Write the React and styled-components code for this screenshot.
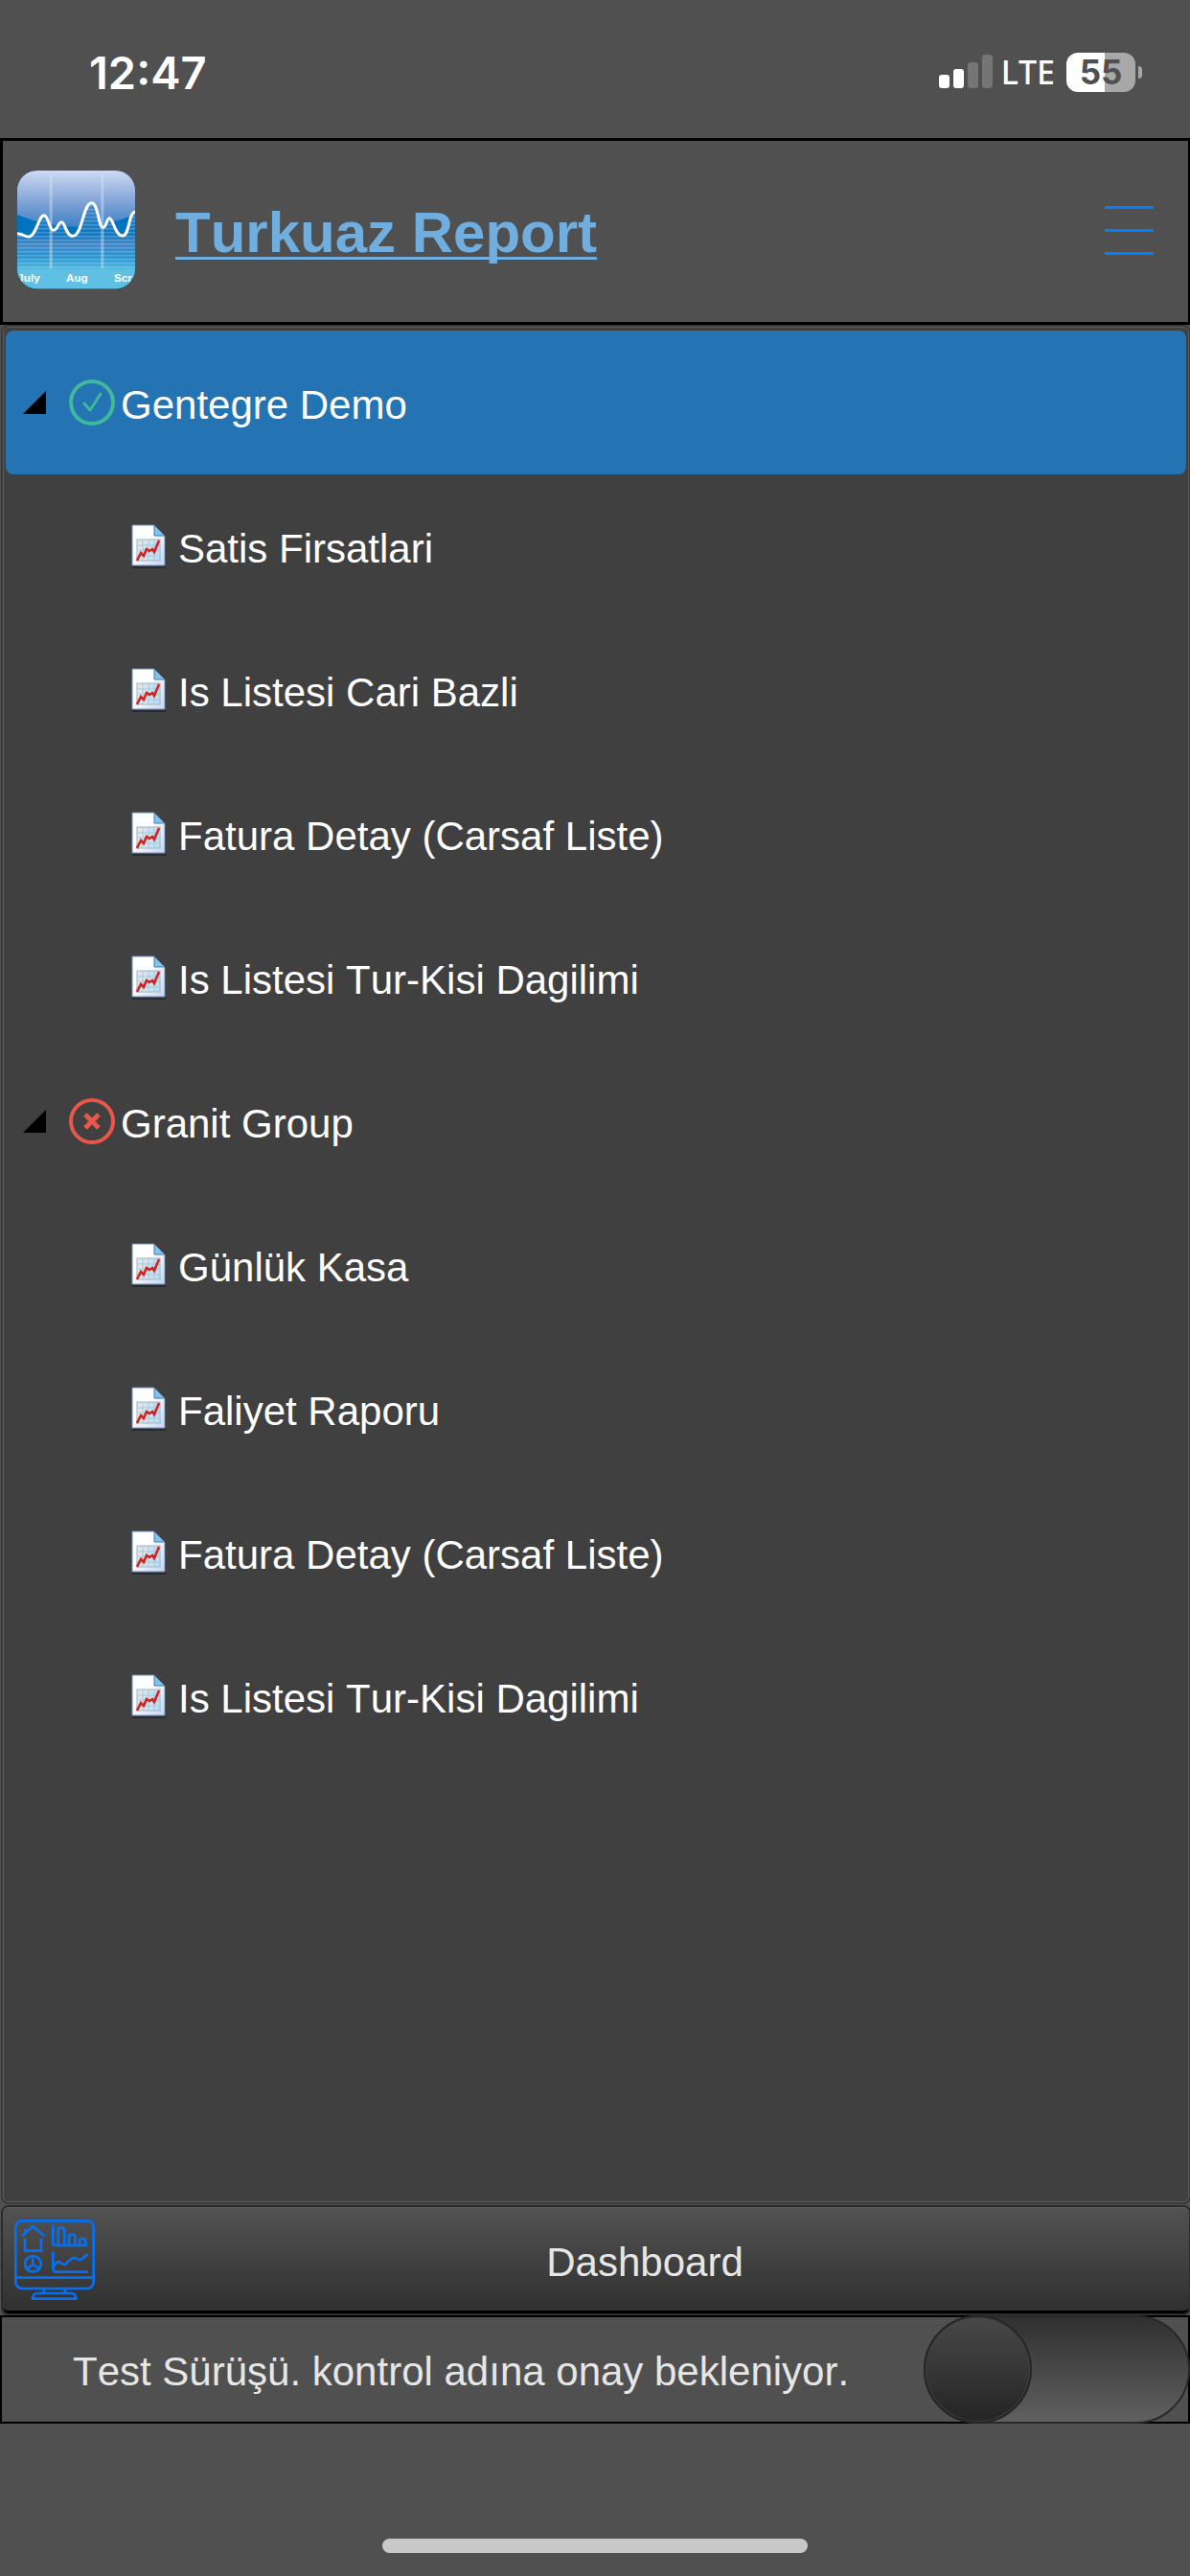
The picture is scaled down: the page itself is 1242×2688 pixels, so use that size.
import React, { useState } from "react";
import styled, { createGlobalStyle } from "styled-components";

const groups = [
  {
    name: "Gentegre Demo",
    online: true,
    reports: [
      "Satis Firsatlari",
      "Is Listesi Cari Bazli",
      "Fatura Detay (Carsaf Liste)",
      "Is Listesi Tur-Kisi Dagilimi",
    ],
  },
  {
    name: "Granit Group",
    online: false,
    reports: [
      "Günlük Kasa",
      "Faliyet Raporu",
      "Fatura Detay (Carsaf Liste)",
      "Is Listesi Tur-Kisi Dagilimi",
    ],
  },
];

const SignalIcon = () => (
  <svg width="56" height="36" viewBox="0 0 56 36" aria-hidden="true">
    <rect x="0" y="21" width="11" height="14" rx="3" fill="#fff" />
    <rect x="15" y="15" width="11" height="20" rx="3" fill="#fff" />
    <rect x="30" y="8" width="11" height="27" rx="3" fill="#757575" />
    <rect x="45" y="0" width="11" height="35" rx="3" fill="#757575" />
  </svg>
);

const wave =
  "M0 197C20 197 20 207 35 207C60 207 66 140 84 140C98 140 100 187 113 187C126 187 128 161 139 161C150 161 152 205 174 205C204 205 206 101 233 101C254 101 254 178 268 178C280 178 279 149 289 149C300 149 306 204 330 204C352 204 348 130 369 130";

const AppLogo = () => (
  <svg width="123" height="124" viewBox="0 0 369 372" aria-hidden="true">
    <defs>
      <linearGradient id="logoTop" x1="0" y1="0" x2="0" y2="1">
        <stop offset="0" stopColor="#cddaf2" />
        <stop offset="0.5" stopColor="#89a9da" />
        <stop offset="1" stopColor="#3f81c6" />
      </linearGradient>
      <linearGradient id="logoLow" x1="0" y1="0" x2="0" y2="1">
        <stop offset="0" stopColor="#4a8ccb" />
        <stop offset="0.45" stopColor="#0b78c2" />
        <stop offset="0.62" stopColor="#3f87c9" />
        <stop offset="0.8" stopColor="#2496d4" />
        <stop offset="1" stopColor="#4db8e0" />
      </linearGradient>
      <pattern id="logoLines" width="12" height="12" patternUnits="userSpaceOnUse">
        <rect width="12" height="4" fill="#fff" opacity="0.22" />
      </pattern>
      <clipPath id="logoClip">
        <rect width="369" height="370" rx="62" />
      </clipPath>
    </defs>
    <rect y="3" width="369" height="369" rx="62" fill="#3a4a52" />
    <g clipPath="url(#logoClip)">
      <rect width="369" height="372" fill="#0073bf" />
      <path d="M0 0H369V138Q270 176 184 176Q90 176 0 138Z" fill="url(#logoTop)" />
      <path d={`${wave}V310H0Z`} fill="url(#logoLow)" />
      <path d={`${wave}V310H0Z`} fill="url(#logoLines)" />
      <rect y="308" width="369" height="64" fill="#5fc0e4" />
      <rect x="101" y="14" width="9" height="292" fill="#d5e4f6" opacity="0.45" />
      <rect x="262" y="14" width="9" height="292" fill="#d5e4f6" opacity="0.45" />
      <path d={wave} fill="none" stroke="#fff" strokeWidth="9" />
      <g fill="#fff" fontFamily="Liberation Sans, sans-serif" fontWeight="700" fontSize="35">
        <text x="1" y="349">July</text>
        <text x="187" y="349" textAnchor="middle">Aug</text>
        <text x="303" y="349">Scr</text>
      </g>
    </g>
  </svg>
);

const StatusIcon = ({ online }) => (
  <svg width="48" height="48" viewBox="0 0 48 48" fill="none" aria-hidden="true">
    <circle cx="24" cy="24" r="22" stroke={online ? "#40b89c" : "#e8574a"} strokeWidth="4" />
    {online ? (
      <path
        d="M16 25L22 32L33 15"
        stroke="#40b89c"
        strokeWidth="3"
        strokeLinecap="round"
        strokeLinejoin="round"
      />
    ) : (
      <path d="M17 17L31 31M31 17L17 31" stroke="#e8574a" strokeWidth="5" />
    )}
  </svg>
);

const ArrowIcon = () => (
  <svg width="24" height="24" viewBox="0 0 24 24" aria-hidden="true">
    <path d="M24 0V24H0Z" fill="#000" />
  </svg>
);

const ReportIcon = () => (
  <svg width="36" height="46" viewBox="0 0 36 46" aria-hidden="true">
    <defs>
      <linearGradient id="sheet" x1="0" y1="0" x2="1" y2="1">
        <stop offset="0.4" stopColor="#fff" />
        <stop offset="1" stopColor="#c3d6f2" />
      </linearGradient>
      <linearGradient id="plot" x1="0" y1="0" x2="1" y2="0">
        <stop offset="0" stopColor="#e6e8ea" />
        <stop offset="1" stopColor="#b8def5" />
      </linearGradient>
    </defs>
    <path d="M1 45H36V12" fill="none" stroke="#222" strokeWidth="2" opacity="0.7" />
    <path d="M1 1H24L35 12V43H1Z" fill="url(#sheet)" stroke="#6d8fc4" strokeWidth="1" />
    <path d="M24 1L35 12H24Z" fill="#7fc4ee" stroke="#4a76b4" strokeWidth="1" />
    <rect x="6" y="16" width="24" height="22" fill="url(#plot)" stroke="#9eb4c4" />
    <path d="M12 16V38M18 16V38M24 16V38M6 22H30M6 27H30M6 33H30" stroke="#a8c8dc" strokeWidth="1" />
    <path
      d="M6 38L10 30L13 33L16 26L19 28L22 26L24 29L29 17"
      fill="none"
      stroke="#cf2420"
      strokeWidth="2.6"
    />
  </svg>
);

const MonitorIcon = () => (
  <svg
    width="84"
    height="84"
    viewBox="0 0 252 252"
    fill="none"
    stroke="#0670f2"
    strokeWidth="8"
    aria-hidden="true"
  >
    <rect x="4" y="4" width="244" height="212" rx="20" />
    <path d="M4 182H248" />
    {/* house */}
    <path d="M24 52L58 21L94 52M34 44V30M33 60V98H84V60" />
    {/* bar chart */}
    <path d="M121 18V72Q121 81 130 81H229M137 80V34Q137 25 147 25T157 34V80M171 80V53Q171 47 181 47T190 53V80M204 80V66Q204 60 214 60T223 66V80" />
    {/* pie */}
    <circle cx="58" cy="139" r="25" />
    <path d="M58 114V141L38 154M58 141L78 154" />
    {/* line chart */}
    <path d="M121 102V154Q121 164 131 164H230M124 147Q132 130 142 133C150 142 162 145 167 133L181 121C194 115 204 134 212 123L230 108" />
    {/* stand */}
    <path d="M92 216V232M159 216V232M57 248Q58 231 72 231H178Q192 231 193 248Z" />
  </svg>
);

const App = () => {
  const [selected, setSelected] = useState("Gentegre Demo");
  const [approved, setApproved] = useState(false);

  return (
    <>
      <GlobalStyle />
      <Page>
        <StatusBar>
          <Clock>12:47</Clock>
          <StatusRight>
            <SignalIcon />
            <Network>LTE</Network>
            <Battery>55</Battery>
          </StatusRight>
        </StatusBar>

        <Header>
          <AppLogo />
          <Title>
            <a href="#home">Turkuaz Report</a>
          </Title>
          <MenuButton type="button" aria-label="Menu">
            <span />
            <span />
            <span />
          </MenuButton>
        </Header>

        <Tree>
          {groups.map((group) => (
            <li key={group.name}>
              <GroupRow
                type="button"
                $active={selected === group.name}
                onClick={() => setSelected(group.name)}
              >
                <ArrowIcon />
                <StatusIcon online={group.online} />
                <RowLabel>{group.name}</RowLabel>
              </GroupRow>
              <ul>
                {group.reports.map((report) => (
                  <li key={report}>
                    <ReportRow type="button">
                      <ReportIcon />
                      <RowLabel>{report}</RowLabel>
                    </ReportRow>
                  </li>
                ))}
              </ul>
            </li>
          ))}
        </Tree>

        <DashboardButton type="button">
          <MonitorIcon />
          <span>Dashboard</span>
        </DashboardButton>

        <Approval>
          <label htmlFor="approval">
            Test Sürüşü. kontrol adına onay bekleniyor.
          </label>
          <Switch
            id="approval"
            type="checkbox"
            checked={approved}
            onChange={(e) => setApproved(e.target.checked)}
          />
        </Approval>

        <HomeArea>
          <HomeIndicator />
        </HomeArea>
      </Page>
    </>
  );
};

const GlobalStyle = createGlobalStyle`
  *,
  *::before,
  *::after {
    box-sizing: border-box;
    margin: 0;
    padding: 0;
  }
  body {
    background-color: #505050;
    font-family: "Liberation Sans", Arial, sans-serif;
    font-size: 42px;
    font-kerning: none;
    color: #fff;
  }
  ul {
    list-style: none;
  }
  button {
    border: none;
    background: none;
    font: inherit;
    font-kerning: none;
    color: inherit;
    cursor: pointer;
  }
  svg {
    display: block;
    flex-shrink: 0;
  }
`;

const Page = styled.div`
  min-height: 100vh;
  display: flex;
  flex-direction: column;
`;

const StatusBar = styled.div`
  height: 144px;
  padding: 6px 51px 0 93px;
  display: flex;
  align-items: center;
  justify-content: space-between;
`;

const Clock = styled.span`
  font-family: Inter, sans-serif;
  font-size: 47px;
  font-weight: 600;
`;

const StatusRight = styled.div`
  display: flex;
  align-items: center;
`;

const Network = styled.span`
  margin: 0 12px 0 9px;
  font-family: "Noto Sans", sans-serif;
  font-size: 34px;
  font-weight: 500;
`;

const Battery = styled.span`
  position: relative;
  width: 72px;
  height: 41px;
  margin-right: 6px;
  border-radius: 12px;
  background: linear-gradient(to right, #fff 55%, #a8a8a8 55%);
  color: #505050;
  font-family: Inter, sans-serif;
  font-size: 35px;
  font-weight: 700;
  line-height: 41px;
  text-align: center;

  &::after {
    content: "";
    position: absolute;
    top: 14px;
    right: -7px;
    width: 4px;
    height: 13px;
    border-radius: 0 4px 4px 0;
    background-color: #a8a8a8;
  }
`;

const Header = styled.header`
  height: 195px;
  padding: 0 36px 3px 15px;
  border: 3px solid #000;
  border-right-width: 2px;
  display: flex;
  align-items: center;
`;

const Title = styled.h1`
  flex: 1;
  margin-left: 42px;
  padding-top: 6px;
  font-size: 60px;
  line-height: 72px;
  a {
    color: #70aee0;
    text-decoration-thickness: 3px;
    text-decoration-skip-ink: none;
    text-underline-offset: 5px;
  }
`;

const MenuButton = styled.button`
  width: 51px;
  height: 51px;
  display: flex;
  flex-direction: column;
  justify-content: space-between;
  span {
    height: 3px;
    background-color: #0080ff;
  }
`;

const Tree = styled.ul`
  flex: 1;
  margin: 2px 1px 0 3px;
  padding: 3px 2px;
  border: 1px solid #5c5c5c;
  border-radius: 6px;
  background-color: #404040;
  box-shadow: 0 0 0 2px #3a3a3a;
`;

const Row = styled.button`
  width: 100%;
  height: 150px;
  display: flex;
  align-items: center;
  text-align: left;
`;

const GroupRow = styled(Row)`
  padding-left: 18px;
  border-radius: 8px;
  background-color: ${({ $active }) => ($active ? "#2473b3" : "transparent")};
  svg + svg {
    margin: 0 6px 0 24px;
  }
`;

const ReportRow = styled(Row)`
  gap: 13px;
  padding-left: 131px;
`;

const RowLabel = styled.span`
  padding-top: 6px;
`;

const DashboardButton = styled.button`
  height: 111px;
  margin: 5px 1px 2px 3px;
  padding-left: 12px;
  border-top: 1px solid #5c5c5c;
  border-bottom: 3px solid #000;
  border-radius: 6px;
  background: linear-gradient(to bottom, #525252, #303030);
  box-shadow: 0 0 0 2px #2c2c2c;
  color: #e6e6e6;
  display: flex;
  align-items: center;
  gap: 6px;
  span {
    flex: 1;
    padding-top: 6px;
    text-align: center;
  }
`;

const Approval = styled.div`
  height: 113px;
  padding-left: 76px;
  box-shadow: inset 0 0 0 2px #000;
  color: #e6e6e6;
  display: flex;
  align-items: center;
  justify-content: space-between;
  label {
    padding-top: 4px;
  }
`;

const Switch = styled.input`
  appearance: none;
  width: 278px;
  height: 113px;
  border: 2px solid #292929;
  border-radius: 57px;
  background: linear-gradient(to bottom, #303030, #606060);
  cursor: pointer;

  &::before {
    content: "";
    display: block;
    width: 113px;
    height: 113px;
    margin: -2px;
    border: 2px solid #262626;
    border-radius: 50%;
    background: linear-gradient(to bottom, #484848, #242424);
    box-shadow: inset 0 0 0 1px #404040;
  }
  &:checked::before {
    margin-left: 163px;
  }
`;

const HomeArea = styled.div`
  height: 159px;
  padding-bottom: 24px;
  display: flex;
  align-items: flex-end;
  justify-content: center;
`;

const HomeIndicator = styled.div`
  width: 36%;
  max-width: 444px;
  height: 15px;
  border-radius: 8px;
  background-color: #c8c8c8;
`;

export default App;
